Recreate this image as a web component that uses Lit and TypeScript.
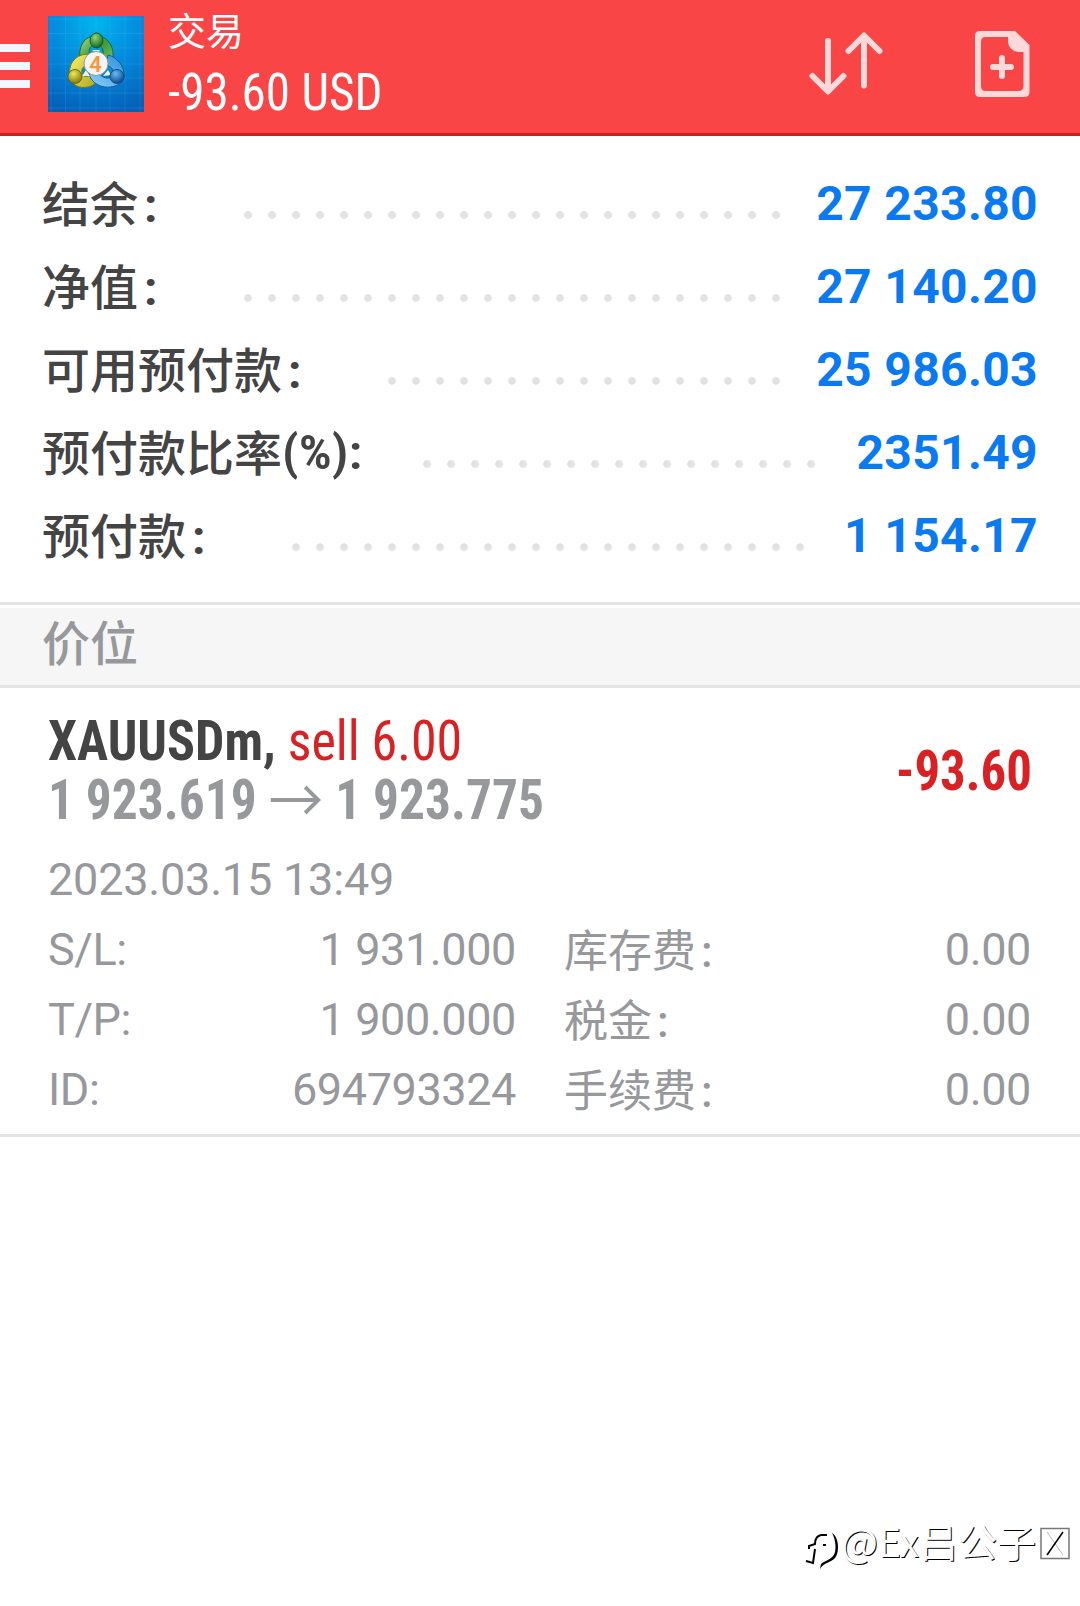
import { LitElement, html, css, svg } from 'lit';
import { customElement, property } from 'lit/decorators.js';

const sansFont = css`Roboto, "Noto Sans CJK SC", sans-serif`;

@customElement('app-header')
export class AppHeader extends LitElement {
  @property() title = '';
  @property() amount = '';

  static styles = css`
    :host {
      display: flex;
      box-sizing: border-box;
      height: 136px;
      background: #fa4547;
      border-bottom: 3px solid #c92121;
      color: #fff;
      font-family: ${sansFont};
    }
    .menu {
      display: flex;
      flex-direction: column;
      gap: 10px;
      width: 30px;
      padding-top: 44px;
    }
    .menu span {
      height: 8px;
      background: #f3f7ff;
    }
    .logo {
      width: 96px;
      height: 96px;
      margin: 16px 0 0 18px;
    }
    .text {
      flex: 1;
      padding-left: 24px;
    }
    .title {
      margin-top: 12px;
      font-size: 38px;
      line-height: 40px;
    }
    .amount {
      margin-top: 11px;
      font-family: 'Roboto Condensed', ${sansFont};
      font-stretch: 75%;
      font-size: 51px;
      line-height: 60px;
      white-space: nowrap;
      transform: scaleX(0.963);
      transform-origin: left;
    }
    .sort {
      width: 74px;
      height: 66px;
      margin-top: 30px;
    }
    .order {
      width: 55px;
      height: 67px;
      margin: 31px 50px 0 92px;
    }
  `;

  renderLogo() {
    return html`
      <svg class="logo" viewBox="0 0 96 96">
        <defs>
          <radialGradient id="sky" cx="50%" cy="8%" r="95%">
            <stop offset="0" stop-color="#02b4ee" />
            <stop offset="0.5" stop-color="#0489dc" />
            <stop offset="1" stop-color="#0560b8" />
          </radialGradient>
          <linearGradient id="green" x1="0" y1="0" x2="1" y2="1">
            <stop offset="0" stop-color="#a4dc8c" />
            <stop offset="0.5" stop-color="#3f9a3b" />
            <stop offset="1" stop-color="#86c46c" />
          </linearGradient>
          <linearGradient id="yellow" x1="0" y1="0" x2="1" y2="1">
            <stop offset="0" stop-color="#fbf36a" />
            <stop offset="1" stop-color="#a8a422" />
          </linearGradient>
          <linearGradient id="blue" x1="1" y1="0" x2="0" y2="1">
            <stop offset="0" stop-color="#2f8fd6" />
            <stop offset="1" stop-color="#8bd0fa" />
          </linearGradient>
          <radialGradient id="greenBall" cx="40%" cy="30%" r="70%">
            <stop offset="0" stop-color="#8fd67c" />
            <stop offset="1" stop-color="#146a1e" />
          </radialGradient>
          <radialGradient id="yellowBall" cx="40%" cy="30%" r="70%">
            <stop offset="0" stop-color="#f0e858" />
            <stop offset="1" stop-color="#837a0c" />
          </radialGradient>
          <radialGradient id="blueBall" cx="40%" cy="30%" r="70%">
            <stop offset="0" stop-color="#6cbcf2" />
            <stop offset="1" stop-color="#0a4a94" />
          </radialGradient>
        </defs>
        <rect width="96" height="96" fill="url(#sky)" />
        ${[3, 17.5, 32, 48, 62, 77, 92].map(
          (p) => svg`<path d="M${p} 0V96M0 ${p}H96" stroke="#5cc4f4" stroke-opacity="0.16" stroke-width="1" />`
        )}
        <g stroke-width="1">
          <path d="M32 44C30 29 37 20 48 20C60 20 68 32 64 45L59 50L54 42C57 35 54 29 48 29C41 29 40 35 42 42Z" fill="url(#green)" stroke="#1c6a2a" />
          <path d="M39 38C26 39 20 49 22 60C23 69 31 73 40 71C46 70 49 66 51 62L44 55C42 62 35 62 34 57C33 52 36 49 42 49Z" fill="url(#yellow)" stroke="#7a760e" />
          <path d="M60 39C69 41 77 50 76 61C75 69 64 72 57 71C49 70 43 65 41 58L50 56C54 62 60 64 65 60C67 56 65 51 58 49Z" fill="url(#blue)" stroke="#165a9c" />
          <path d="M44 34H52L50 38ZM34 60L38 54L42 60ZM55 60L60 54L63 59Z" fill="#e8f4e4" />
          <ellipse cx="48.5" cy="24.5" rx="6.5" ry="7.5" fill="url(#greenBall)" stroke="#175a1f" />
          <circle cx="27" cy="60.5" r="7" fill="url(#yellowBall)" stroke="#6e690c" />
          <circle cx="69" cy="60.5" r="7" fill="url(#blueBall)" stroke="#0f4b88" />
          <circle cx="48" cy="47.5" r="12" fill="#f4f4f2" stroke="#8e9c8c" />
        </g>
        <text x="47.5" y="55.5" text-anchor="middle" font-family="Roboto" font-size="22" font-weight="600" fill="#f39a3c">4</text>
      </svg>
    `;
  }

  render() {
    return html`
      <div class="menu"><span></span><span></span><span></span></div>
      ${this.renderLogo()}
      <div class="text">
        <div class="title">${this.title}</div>
        <div class="amount">${this.amount}</div>
      </div>
      <svg class="sort" viewBox="0 0 74 66" fill="none" stroke="#ffd9da" stroke-width="6" stroke-linecap="round" stroke-linejoin="round">
        <path d="M19 11V61M3.5 46L19 61.5L34.5 46" />
        <path d="M55 55.5V6M39.5 21L55 5.5L70.5 21" />
      </svg>
      <svg class="order" viewBox="0 0 55 67">
        <path fill="#ffd9da" fill-rule="evenodd" d="M5 0H40L54.5 14V61Q54.5 66 49.5 66H5Q0 66 0 61V5Q0 0 5 0ZM11 6Q6 6 6 11V55Q6 60 11 60H43.5Q48.5 60 48.5 55V21H43Q33 19 33 10V6Z" />
        <path fill="none" stroke="#ffd9da" stroke-width="6" stroke-linecap="round" d="M18 36H36M27 27V45" />
      </svg>
    `;
  }
}

@customElement('account-row')
export class AccountRow extends LitElement {
  @property() label = '';
  @property() value = '';
  @property({ type: Number }) labelWidth = 0;
  @property({ type: Number }) dots = 0;
  @property({ type: Boolean }) percent = false;

  static styles = css`
    :host {
      display: flex;
      box-sizing: border-box;
      height: 83px;
      padding: 1px 42px 0;
      font-family: ${sansFont};
      font-size: 48px;
      line-height: 83px;
      white-space: nowrap;
    }
    .label {
      padding-top: 2px;
      color: #444;
      font-weight: 500;
    }
    .colon {
      margin-left: 6px;
      font-weight: 700;
      line-height: 1;
    }
    .suffix {
      display: inline-block;
      font-family: 'Roboto Condensed', ${sansFont};
      font-stretch: 75%;
      font-weight: 600;
      line-height: 1;
      vertical-align: 2px;
      transform: scaleX(1.08);
      transform-origin: left;
    }
    .leader {
      height: 8px;
      margin-top: 49px;
      background: radial-gradient(circle, #e3e3e5 3.5px, transparent 4.2px) 0 0 / 24px 8px repeat-x;
    }
    .value {
      margin-left: auto;
      color: #0a7af2;
      font-weight: 700;
      letter-spacing: 0.35px;
    }
  `;

  render() {
    return html`
      <div class="label" style="width:${this.labelWidth}px">${this.label}${this.percent
        ? html`<span class="suffix">(%):</span>`
        : html`<span class="colon">:</span>`}</div>
      <div class="leader" style="width:${this.dots * 24}px"></div>
      <div class="value">${this.value}</div>
    `;
  }
}

@customElement('position-card')
export class PositionCard extends LitElement {
  static styles = css`
    :host {
      display: block;
      box-sizing: border-box;
      height: 449px;
      padding: 24px 48px 0;
      border-bottom: 3px solid #e4e4e4;
      font-family: ${sansFont};
      color: #96989b;
      white-space: nowrap;
    }
    .head {
      display: flex;
      justify-content: space-between;
      align-items: center;
      font-family: 'Roboto Condensed', ${sansFont};
      font-stretch: 75%;
      font-size: 55px;
      font-weight: 700;
      line-height: 59px;
    }
    .deal {
      transform: scaleX(0.945);
      transform-origin: left;
    }
    .symbol {
      color: #444;
    }
    .side {
      font-weight: 400;
    }
    .side,
    .profit {
      color: #d92123;
    }
    .profit {
      transform: scaleX(0.925);
      transform-origin: right;
    }
    .prices {
      display: flex;
      transform: scaleX(0.935);
      transform-origin: left;
    }
    .arrow {
      width: 57px;
      height: 30px;
      margin: 14px 12px 0 15px;
    }
    .time {
      margin-top: 15px;
      font-size: 45px;
      line-height: 70px;
      letter-spacing: -0.2px;
    }
    .details {
      display: grid;
      grid-template-columns: 468px 467px;
      column-gap: 48px;
      font-size: 45px;
      line-height: 70px;
    }
    .detail {
      display: flex;
      justify-content: space-between;
      height: 70px;
      letter-spacing: -0.4px;
    }
    .cjk {
      padding-top: 2px;
      font-size: 44px;
      letter-spacing: 0;
    }
    .colon {
      margin-left: 5px;
      font-weight: 500;
    }
  `;

  details = [
    ['S/L', '1 931.000'],
    ['库存费', '0.00'],
    ['T/P', '1 900.000'],
    ['税金', '0.00'],
    ['ID', '694793324'],
    ['手续费', '0.00'],
  ];

  render() {
    return html`
      <div class="head">
        <div>
          <div class="deal"><span class="symbol">XAUUSDm, </span><span class="side">sell 6.00</span></div>
          <div class="prices">
            <span>1 923.619</span>
            <svg class="arrow" viewBox="0 0 57 30" fill="none" stroke="#96989b" stroke-width="4">
              <path d="M0 15H52M37 2L51 15L37 28" />
            </svg>
            <span>1 923.775</span>
          </div>
        </div>
        <div class="profit">-93.60</div>
      </div>
      <div class="time">2023.03.15 13:49</div>
      <div class="details">
        ${this.details.map(
          ([name, value], i) => html`<div class="detail">
            ${i % 2
              ? html`<span class="cjk">${name}<span class="colon">:</span></span>`
              : html`<span>${name}:</span>`}
            <span>${value}</span>
          </div>`
        )}
      </div>
    `;
  }
}

@customElement('app-root')
export class AppRoot extends LitElement {
  static styles = css`
    :host {
      display: flex;
      flex-direction: column;
      width: 1080px;
      height: 1606px;
      overflow: hidden;
      background: #fff;
      font-family: ${sansFont};
    }
    .account {
      box-sizing: border-box;
      height: 469px;
      padding-top: 25px;
      border-bottom: 3px solid #e4e4e4;
    }
    .section {
      box-sizing: border-box;
      height: 80px;
      margin-top: 3px;
      padding: 3px 0 0 42px;
      border-bottom: 3px solid #e4e4e4;
      background: #f6f6f6;
      color: #96989b;
      font-size: 48px;
      font-weight: 500;
      line-height: 67px;
    }
    .watermark {
      display: flex;
      align-items: flex-start;
      justify-content: flex-end;
      margin-top: auto;
      height: 88px;
      padding-right: 8px;
      color: #fff;
      font-family: 'Noto Sans CJK SC', sans-serif;
      font-size: 39px;
      line-height: 44px;
      text-shadow: 1px 1px 0 #000;
    }
    .badge {
      width: 38px;
      height: 44px;
      margin: 12px -1px 0 0;
    }
    .box {
      width: 32px;
      height: 34px;
      margin: 9px 0 0 4px;
    }
  `;

  rows = [
    { label: '结余', value: '27 233.80', labelWidth: 194, dots: 23 },
    { label: '净值', value: '27 140.20', labelWidth: 194, dots: 23 },
    { label: '可用预付款', value: '25 986.03', labelWidth: 338, dots: 17 },
    { label: '预付款比率', value: '2351.49', labelWidth: 373, dots: 17, percent: true },
    { label: '预付款', value: '1 154.17', labelWidth: 242, dots: 22 },
  ];

  render() {
    return html`
      <app-header title="交易" amount="-93.60 USD"></app-header>
      <div class="account">
        ${this.rows.map(
          (r) => html`<account-row
            .label=${r.label}
            .value=${r.value}
            .labelWidth=${r.labelWidth}
            .dots=${r.dots}
            .percent=${!!r.percent}
          ></account-row>`
        )}
      </div>
      <div class="section">价位</div>
      <position-card></position-card>
      <div class="watermark">
        <svg class="badge" viewBox="0 0 38 44">
          <path d="M28 3C36 8 35 24 31 28C27 33 20 32 16 39L17 34C20 31 26 30 29 26C33 22 32 10 28 3Z" />
          <path d="M23 5H17C12 6 11 10 11 14L5 16V19M11 19L9 33L2 31" fill="none" stroke="#000" stroke-width="2" />
          <rect x="19" y="14" width="3" height="2" />
        </svg>
        <span>@Ex吕公子</span>
        <svg class="box" viewBox="0 0 32 34" fill="none">
          <rect x="1" y="1.5" width="28" height="30" stroke="#777" stroke-width="1.5" />
          <path d="M7 5L23 28" stroke="#bbb" />
          <path d="M23 5L7 28" stroke="#000" stroke-width="1.5" />
        </svg>
      </div>
    `;
  }
}
